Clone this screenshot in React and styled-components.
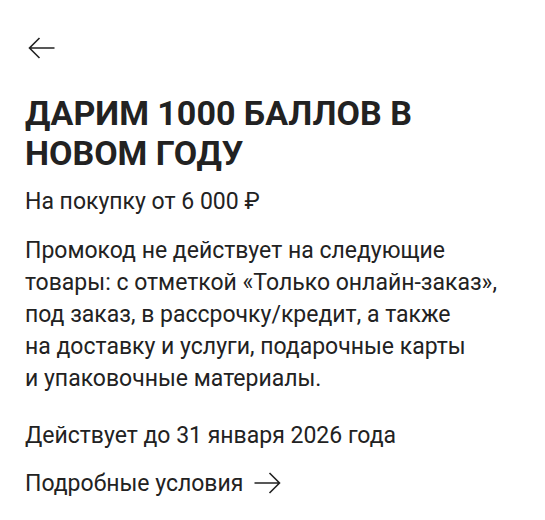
import React from "react";
import styled, { createGlobalStyle } from "styled-components";

const GlobalStyle = createGlobalStyle`
  body {
    margin: 0;
    background: #ffffff;
    font-family: Roboto, "Liberation Sans", sans-serif;
    color: #222222;
  }
`;

const Page = styled.div`
  display: flex;
  flex-direction: column;
  align-items: flex-start;
  padding: 37px 25px 0 25px;
`;

const BackButton = styled.button`
  display: flex;
  align-items: center;
  height: 22px;
  padding: 0 0 0 3px;
  border: none;
  background: none;
  cursor: pointer;
`;

const Title = styled.h1`
  margin: 34px 0 0 0;
  font-size: 34px;
  line-height: 40px;
  font-weight: 700;
  color: #222222;
`;

const Text = styled.p`
  margin: ${(p) => p.$top || 0}px 0 0 0;
  font-size: 23px;
  line-height: 32px;
  font-weight: 400;
  color: #222222;
`;

const MoreLink = styled.a`
  display: flex;
  align-items: center;
  gap: 11px;
  margin-top: 16px;
  font-size: 23px;
  line-height: 32px;
  color: #222222;
  text-decoration: none;
  cursor: pointer;

  svg {
    margin-bottom: 3px;
  }
`;

function ArrowLeft() {
  return (
    <svg width="27" height="22" viewBox="0 0 27 22" fill="none">
      <path d="M26.5 11H1.5M11.5 1L1.5 11L11.5 21" stroke="#222" strokeWidth="1.6" />
    </svg>
  );
}

function ArrowRight() {
  return (
    <svg width="27" height="22" viewBox="0 0 27 22" fill="none">
      <path d="M0.5 11H25.5M15.5 1L25.5 11L15.5 21" stroke="#222" strokeWidth="1.6" />
    </svg>
  );
}

export default function App() {
  return (
    <>
      <GlobalStyle />
      <Page>
        <BackButton aria-label="Назад">
          <ArrowLeft />
        </BackButton>
        <Title>
          ДАРИМ 1000 БАЛЛОВ В<br />
          НОВОМ ГОДУ
        </Title>
        <Text $top={13}>На покупку от 6 000 ₽</Text>
        <Text $top={17}>
          Промокод не действует на следующие
          <br />
          товары: с отметкой «Только онлайн-заказ»,
          <br />
          под заказ, в рассрочку/кредит, а также
          <br />
          на доставку и услуги, подарочные карты
          <br />
          и упаковочные материалы.
        </Text>
        <Text $top={25}>Действует до 31 января 2026 года</Text>
        <MoreLink>
          Подробные условия
          <ArrowRight />
        </MoreLink>
      </Page>
    </>
  );
}
